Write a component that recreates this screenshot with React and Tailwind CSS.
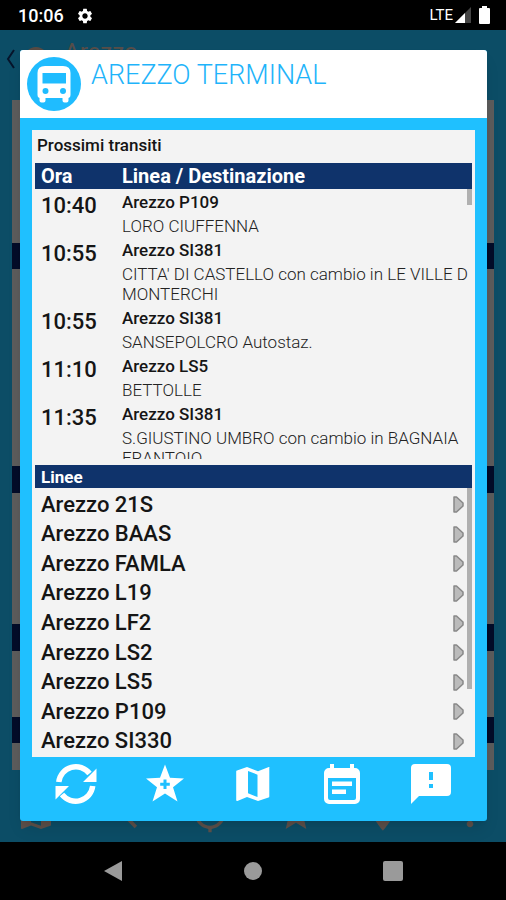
import React from 'react';
import { MdSettings, MdSearch, MdMyLocation, MdStar, MdPlace, MdMoreVert, MdMap } from 'react-icons/md';

const transits = [
  { time: '10:40', line: 'Arezzo P109', destination: ['LORO CIUFFENNA'] },
  { time: '10:55', line: 'Arezzo SI381', destination: ["CITTA' DI CASTELLO con cambio in LE VILLE D", 'MONTERCHI'] },
  { time: '10:55', line: 'Arezzo SI381', destination: ['SANSEPOLCRO Autostaz.'] },
  { time: '11:10', line: 'Arezzo LS5', destination: ['BETTOLLE'] },
  { time: '11:35', line: 'Arezzo SI381', destination: ['S.GIUSTINO UMBRO con cambio in BAGNAIA', 'FRANTOIO'] },
];

const lines = ['21S', 'BAAS', 'FAMLA', 'L19', 'LF2', 'LS2', 'LS5', 'P109', 'SI330'];

const actions = [
  {
    label: 'Aggiorna',
    icon: (
      <>
        <path fill="none" stroke="currentColor" strokeWidth="5.5" d="M2.8 18A17.200 17.200 0 0 1 33.500 9.500M36.700 22A17.200 17.200 0 0 1 6 30.500" />
        <path d="M40.500 4.500V18H27zM-.5 35.500V22H13z" />
      </>
    ),
  },
  {
    label: 'Aggiungi ai preferiti',
    icon: (
      <path
        fillRule="evenodd"
        d="M20 .5l5 13.300 14 .700L28 23.200 32.500 37.500 20 29.600 7.500 37.500 12 23.200 1 14.500l14-.700zM18.500 15.500v3.300h-3.300v3h3.300v3.300h3v-3.300h3.300v-3h-3.300v-3.300z"
      />
    ),
  },
  {
    label: 'Mappa',
    icon: (
      <path
        fillRule="evenodd"
        d="M36.300 3l-.500.100L25 7.200 14 3 4 6.600a1 1 0 0 0-.800 1V36a1 1 0 0 0 1.200 1L14 33l11 4 10.500-3.500a1 1 0 0 0 .800-1V4a1 1 0 0 0 0-1zM24.500 33l-9.500-3.700V7l9.500 3.700z"
      />
    ),
  },
  {
    label: 'Orari',
    icon: (
      <path
        fillRule="evenodd"
        d="M8 0h4v4h16V0h4v4h1a5 5 0 0 1 5 5v26a5 5 0 0 1-5 5H7a5 5 0 0 1-5-5V9a5 5 0 0 1 5-5h1zM6 14v20a2 2 0 0 0 2 2h24a2 2 0 0 0 2-2V14zM10 17.500h20v4.500H10zM10 25.500h14v4.500H10z"
      />
    ),
  },
  {
    label: 'Segnala',
    icon: (
      <path
        fillRule="evenodd"
        d="M4 0h32a4 4 0 0 1 4 4v24a4 4 0 0 1-4 4H8l-8 8V4a4 4 0 0 1 4-4zM18 8v8h4V8zM18 20v4h4v-4z"
      />
    ),
  },
];

const StatusBar = () => (
  <div className="h-[30px] shrink-0 bg-black text-white flex items-center justify-between pl-[18px] pr-4">
    <div className="flex items-center gap-3 pt-px">
      <span className="text-lg font-medium">10:06</span>
      <MdSettings className="w-[18px] h-[18px]" />
    </div>
    <div className="flex items-center gap-[2px]">
      <span className="text-[15px]">LTE</span>
      <svg className="w-4 h-4" viewBox="0 0 16 16">
        <path fill="#444" d="M16 0v16H0z" />
        <path fill="#fff" d="M10 6v10H0z" />
      </svg>
      <svg className="w-[11px] h-[18px] ml-[6px]" viewBox="0 0 11 18" fill="currentColor">
        <path d="M3 0h5v2h2a1 1 0 0 1 1 1v14a1 1 0 0 1-1 1H1a1 1 0 0 1-1-1V3a1 1 0 0 1 1-1h2z" />
      </svg>
    </div>
  </div>
);

// Stop list page that stays dimmed under the dialog
const Backdrop = () => (
  <div className="absolute inset-0 bg-[#1fc0ff] flex flex-col" aria-hidden="true">
    <div className="h-[70px] shrink-0 flex items-start gap-2 pl-[6px] pt-2">
      <svg className="w-[10px] h-6 mt-[9px] text-[#0f336b]" viewBox="0 0 10 24" fill="none" stroke="currentColor" strokeWidth="2">
        <path d="M8 3L2 12l6 9" />
      </svg>
      <div className="w-6 h-6 mt-[9px] rounded-full bg-[#d8b8a8]"></div>
      <span className="ml-2 text-2xl leading-7 text-[#d8c0b4]">Arezzo</span>
    </div>
    <div className="flex-1 mx-3 grid grid-rows-[143fr_26px_197fr_27px_131fr_27px_66fr_26px_27fr]">
      <div className="bg-[#e6e6e6]"></div>
      <div className="bg-[#081e64]"></div>
      <div className="bg-[#e6e6e6]"></div>
      <div className="bg-[#081e64]"></div>
      <div className="bg-[#e6e6e6]"></div>
      <div className="bg-[#081e64]"></div>
      <div className="bg-[#e6e6e6]"></div>
      <div className="bg-[#081e64]"></div>
      <div className="bg-[#e6e6e6]"></div>
    </div>
    <div className="h-[72px] shrink-0 px-1 pb-2 flex items-end justify-between text-[40px] text-[#e8c8b8]">
      <MdMap className="ml-3" />
      <MdSearch />
      <MdMyLocation />
      <MdStar />
      <MdPlace />
      <MdMoreVert className="mr-3" />
    </div>
    <div className="absolute inset-0 bg-black/60"></div>
  </div>
);

const BusIcon = () => (
  <svg className="w-[54px] h-[54px] shrink-0" viewBox="0 0 54 54">
    <circle cx="27" cy="27" r="27" fill="#1fbcff" />
    <path
      fill="#fff"
      fillRule="evenodd"
      d="M18 9h18q7.500 0 7.500 7v22a3 3 0 0 1-2 3v2.500a2 2 0 0 1-2 2h-2a2 2 0 0 1-2-2V41H18.500v2.500a2 2 0 0 1-2 2h-2a2 2 0 0 1-2-2V41a3 3 0 0 1-2-3V16q0-7 7.500-7zM15.500 16v10.500h23.500V16zM18.500 31a3 3 0 1 0 0 6 3 3 0 0 0 0-6zM36 31a3 3 0 1 0 0 6 3 3 0 0 0 0-6z"
    />
  </svg>
);

const Transits = () => (
  <section className="relative flex-1 min-h-0 overflow-hidden">
    <table className="w-full table-fixed border-collapse text-left">
      <thead>
        <tr className="h-[26px] bg-[#0f336b] text-white text-[20px] leading-[26px]">
          <th className="w-[87px] p-0 pl-[6px] font-bold">Ora</th>
          <th className="p-0 font-bold">Linea / Destinazione</th>
        </tr>
      </thead>
      <tbody>
        {transits.map((transit, idx) => (
          <tr key={idx} className="align-top">
            <td className="p-0 pl-[6px] pt-[5px] text-[22px] leading-6 font-medium">{transit.time}</td>
            <td className="p-0 pt-[2px] pb-px overflow-hidden whitespace-nowrap">
              <div className="mb-[3px] text-[17px] leading-[22px] font-medium">{transit.line}</div>
              {transit.destination.map((row) => (
                <div key={row} className="text-[17px] leading-5 font-light text-[#222]">{row}</div>
              ))}
            </td>
          </tr>
        ))}
      </tbody>
    </table>
    <div className="absolute right-0 top-[26px] w-[5px] h-4 bg-[#b0b0b0]"></div>
  </section>
);

const Lines = () => (
  <section className="relative mt-[6px]">
    <h2 className="h-[23px] pl-[6px] bg-[#0f336b] text-white text-[17px] leading-6 font-bold">Linee</h2>
    <ul className="h-[269px] pt-[2px] pb-px flex flex-col">
      {lines.map((line) => (
        <li key={line} className="flex-1 min-h-0">
          <button type="button" className="w-full h-full pl-[6px] pr-2 flex items-center justify-between text-[22px] leading-7 font-medium">
            Arezzo {line}
            <svg className="w-[11px] h-[17px]" viewBox="0 0 11 17">
              <path d="M1 1h2.500l6.500 6v3l-6.500 6H1z" fill="#bbb" stroke="#888" strokeWidth="1.500" strokeLinejoin="round" />
            </svg>
          </button>
        </li>
      ))}
    </ul>
    <div className="absolute right-0 top-[23px] w-[5px] h-[201px] bg-[#b0b0b0]"></div>
  </section>
);

const App = () => {
  return (
    <div className="h-screen flex flex-col font-[Roboto,sans-serif] text-[#151515] bg-black">
      <StatusBar />

      <main className="relative flex-1 min-h-0">
        <Backdrop />

        <div role="dialog" aria-label="Arezzo Terminal" className="absolute left-5 right-[19px] top-5 bottom-[21px] flex flex-col rounded-[3px] overflow-hidden bg-[#1fc0ff] shadow-lg">
          <header className="h-[68px] shrink-0 bg-white flex items-start gap-[10px] px-[7px] pt-[7px]">
            <BusIcon />
            <h1 className="text-[27px] leading-9 font-light text-[#1fb4fa]">AREZZO TERMINAL</h1>
          </header>

          <div className="flex-1 min-h-0 mx-3 mt-3 px-[3px] bg-[#f3f3f3] flex flex-col">
            <p className="pl-[2px] h-[33px] shrink-0 text-[17px] leading-[31px] font-medium">Prossimi transiti</p>
            <Transits />
            <Lines />
          </div>

          <div className="h-16 shrink-0 px-3 grid grid-cols-5 text-white">
            {actions.map((action) => (
              <button key={action.label} type="button" aria-label={action.label} className="flex justify-center pt-[7px]">
                <svg className="w-10 h-10 overflow-visible" viewBox="0 0 40 40" fill="currentColor">
                  {action.icon}
                </svg>
              </button>
            ))}
          </div>
        </div>
      </main>

      <nav className="h-[58px] shrink-0 bg-black text-[#9a9a9a] flex items-center justify-center">
        <button type="button" aria-label="Indietro" className="w-[140px] flex justify-center">
          <svg className="w-5 h-5" viewBox="0 0 20 20" fill="currentColor">
            <path d="M19 0v20L1 10z" />
          </svg>
        </button>
        <button type="button" aria-label="Home" className="w-[140px] flex justify-center">
          <span className="w-[18px] h-[18px] rounded-full bg-[#9a9a9a]"></span>
        </button>
        <button type="button" aria-label="Recenti" className="w-[140px] flex justify-center">
          <span className="w-5 h-5 rounded-[2px] bg-[#9a9a9a]"></span>
        </button>
      </nav>
    </div>
  );
};

export default App;
